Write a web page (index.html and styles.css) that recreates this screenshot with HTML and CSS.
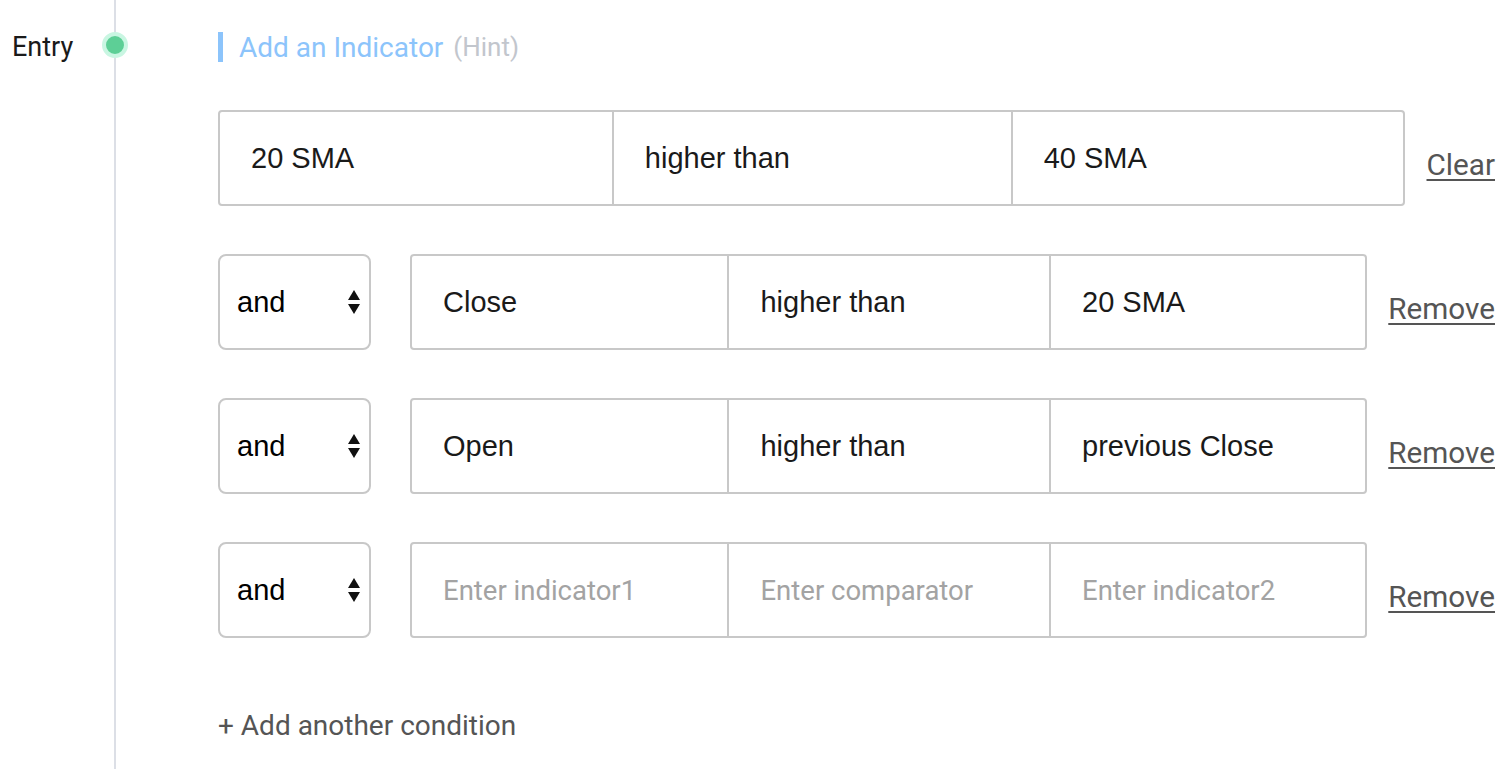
FILE: index.html
```html
<!DOCTYPE html>
<html>
<head>
<meta charset="utf-8">
<link rel="stylesheet" href="styles.css">
</head>
<body>
<div class="entry">
  <div class="label">Entry</div>
  <div class="timeline"><span class="dot"></span></div>
  <div class="content">
    <div class="header">
      <span class="bar"></span>
      <span class="title">Add an Indicator</span>
      <span class="hint">(Hint)</span>
    </div>

    <div class="row">
      <div class="group">
        <div class="cell">20 SMA</div>
        <div class="cell">higher than</div>
        <div class="cell">40 SMA</div>
      </div>
      <a class="link link-clear">Clear</a>
    </div>

    <div class="row">
      <div class="select">and<span class="arrows"><span class="up"></span><span class="down"></span></span></div>
      <div class="group">
        <div class="cell">Close</div>
        <div class="cell">higher than</div>
        <div class="cell">20 SMA</div>
      </div>
      <a class="link">Remove</a>
    </div>

    <div class="row">
      <div class="select">and<span class="arrows"><span class="up"></span><span class="down"></span></span></div>
      <div class="group">
        <div class="cell">Open</div>
        <div class="cell">higher than</div>
        <div class="cell">previous Close</div>
      </div>
      <a class="link">Remove</a>
    </div>

    <div class="row row-last">
      <div class="select">and<span class="arrows"><span class="up"></span><span class="down"></span></span></div>
      <div class="group">
        <div class="cell placeholder">Enter indicator1</div>
        <div class="cell placeholder">Enter comparator</div>
        <div class="cell placeholder">Enter indicator2</div>
      </div>
      <a class="link">Remove</a>
    </div>

    <div class="add">+ Add another condition</div>
  </div>
</div>
</body>
</html>
```

FILE: styles.css
```css
html, body {
  margin: 0;
  padding: 0;
  background: #fff;
  height: 100%;
  overflow: hidden;
}
body {
  font-family: Roboto, "Liberation Sans", sans-serif;
}
.entry {
  display: grid;
  grid-template-columns: 102px 26px 1fr;
  min-height: 769px;
}
.label {
  padding-left: 12px;
  padding-top: 30px;
  font-size: 27px;
  line-height: 34px;
  color: #1a1a1a;
  height: 34px;
}
.timeline {
  background: linear-gradient(#dcdfe6, #dcdfe6) no-repeat center / 2px 100%;
  position: relative;
}
.dot {
  position: absolute;
  left: 0;
  top: 32px;
  width: 18px;
  height: 18px;
  border-radius: 50%;
  background: #5dcf96;
  border: 4px solid #c9f6e2;
}
.content {
  margin-left: 90px;
  padding-right: 10px;
  padding-top: 32px;
}
.header {
  display: flex;
  align-items: center;
  height: 30px;
  margin-bottom: 48px;
}
.bar {
  width: 5px;
  height: 30px;
  background: #8cc4fb;
  margin-right: 16px;
}
.title {
  font-size: 28px;
  color: #8cc4fb;
  margin-right: 10px;
}
.hint {
  font-size: 26px;
  color: #c2c6cd;
}
.row {
  display: flex;
  align-items: center;
  margin-bottom: 48px;
}
.row-last {
  margin-bottom: 0;
}
.group {
  flex: 1;
  display: grid;
  grid-template-columns: 394fr 399fr 390fr;
  height: 96px;
  box-sizing: border-box;
  border: 2px solid #c8c8c8;
  border-radius: 4px;
}
.cell {
  display: flex;
  align-items: center;
  padding-left: 31px;
  font-family: "Liberation Sans", Arial, sans-serif;
  font-size: 29px;
  color: #1a1a1a;
  border-right: 2px solid #c8c8c8;
}
.cell:last-child {
  border-right: 0;
}
.cell.placeholder {
  font-family: Roboto, sans-serif;
  font-size: 27.5px;
  color: #a3a3a3;
}
.select {
  width: 153px;
  height: 96px;
  box-sizing: border-box;
  border: 2px solid #c8c8c8;
  border-radius: 8px;
  margin-right: 39px;
  display: flex;
  align-items: center;
  justify-content: space-between;
  padding: 0 9px 0 17px;
  font-family: "Liberation Sans", Arial, sans-serif;
  font-size: 29px;
  color: #000;
}
.arrows {
  display: flex;
  flex-direction: column;
  gap: 4px;
}
.up, .down {
  width: 0;
  height: 0;
  border-left: 6.5px solid transparent;
  border-right: 6.5px solid transparent;
}
.up { border-bottom: 10px solid #111; }
.down { border-top: 10px solid #111; }
.link {
  font-size: 29.7px;
  color: #555;
  text-decoration: underline;
  text-decoration-thickness: 2px;
  text-underline-offset: 4px;
  margin-left: 21px;
  padding-top: 12px;
}
.link-clear {
  margin-left: 22px;
}
.add {
  margin-top: 71px;
  font-size: 28px;
  color: #555;
}
```
